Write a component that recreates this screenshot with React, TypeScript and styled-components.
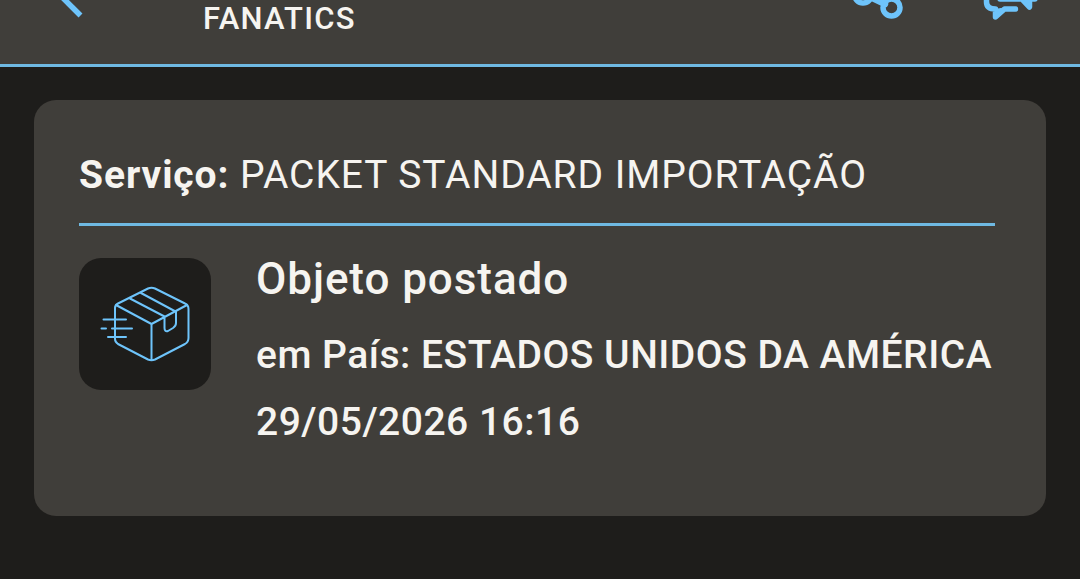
import React from "react";
import styled, { createGlobalStyle } from "styled-components";

const Global = createGlobalStyle`
  html, body { margin: 0; background: #1e1d1b; overflow: hidden; }
  * { box-sizing: border-box; }
`;
const Screen = styled.div`
  height: 579px;
  overflow: hidden;
  background: #1e1d1b;
  color: #f6f4f0;
  font-family: Roboto, "Liberation Sans", sans-serif;
  white-space: nowrap;
`;
const Header = styled.header`
  display: flex;
  height: 67px;
  background: #403e3a;
  border-bottom: 3px solid #6fb9e2;
`;
const BackSlot = styled.div`
  width: 203px;
`;
const HeaderTitle = styled.div`
  flex: 1;
  font-size: 31px;
  font-weight: 500;
  line-height: 38px;
  letter-spacing: 1.3px;
`;
const Actions = styled.div`
  width: 240px;
`;
const Icon = styled.svg`
  display: block;
  fill: none;
  stroke: #6ec4fb;
`;
const Card = styled.main`
  width: 1012px;
  height: 416px;
  margin: 33px 0 0 34px;
  padding: 50px 51px 0 45px;
  border-radius: 22px;
  background: #403e3a;
`;
const Service = styled.div`
  height: 76px;
  border-bottom: 3px solid #6fb9e2;
  font-size: 39px;
  font-weight: 400;
  line-height: 50px;
  letter-spacing: 0.92px;
`;
const Label = styled.b`
  font-weight: 700;
`;
const Event = styled.div`
  display: flex;
  gap: 45px;
  margin-top: 32px;
`;
const Tile = styled.div`
  flex: none;
  width: 132px;
  height: 132px;
  border-radius: 22px;
  background: #1e1d1b;
`;
const Details = styled.div`
  font-weight: 500;
`;
const EventTitle = styled.div`
  font-size: 44px;
  line-height: 42px;
  letter-spacing: 0.93px;
`;
const Line = styled.div<{ $gap: number }>`
  margin-top: ${(p) => p.$gap}px;
  font-size: 39px;
  line-height: 42px;
  letter-spacing: 0.5px;
`;

export default function App() {
  return (
    <Screen>
      <Global />
      <Header>
        <BackSlot>
          <Icon width="203" height="60" strokeWidth="5.5">
            <path d="M55 -10L80.5 15.5" />
          </Icon>
        </BackSlot>
        <HeaderTitle>FANATICS</HeaderTitle>
        <Actions>
          <Icon width="240" height="60" viewBox="840 0 240 60" strokeWidth="5.5" strokeLinecap="round" strokeLinejoin="round">
            <circle cx="863" cy="-5.500" r="8.5" />
            <circle cx="891.500" cy="7.500" r="8.500" />
            <path d="M868 -4L885 4" strokeWidth="6.500" />
            <path d="M986.500 -4V2Q986.500 9 995.500 9V17L1004.500 9H1015.500" />
            <path d="M1000 -1H1022L1029.500 7V-1H1035" />
            <path d="M995.500 10L1001 9L996 16ZM1024 -1H1030V5Z" fill="#6ec4fb" strokeWidth="2" />
          </Icon>
        </Actions>
      </Header>
      <Card>
        <Service><Label>Serviço:</Label> PACKET STANDARD IMPORTAÇÃO</Service>
        <Event>
          <Tile>
            <Icon width="132" height="132" viewBox="79 258 132 132" strokeWidth="2" strokeLinecap="round" strokeLinejoin="round">
              <path d="M115 308Q115 305 118 303.500L148 288.500Q151.500 287 155 288.500L185 303.500Q188.500 305 188.500 309V338Q188.500 342 185 344L155 359.500Q151.500 361 148 359.500L118 344Q115 342 115 339Z" />
              <path d="M116 305L151.500 324L187 305M151.500 324V360M141 293L175.500 311.500M130 298.500L164.500 316.500M164.500 317V328Q164.500 332 168 331L173 328Q176 326 176 323V312" />
              <path d="M103.500 319.500H126M101.500 328.500H106M112 328.500H132M108 337H126" />
            </Icon>
          </Tile>
          <Details>
            <EventTitle>Objeto postado</EventTitle>
            <Line $gap={34}>em País: ESTADOS UNIDOS DA AMÉRICA</Line>
            <Line $gap={25}>29/05/2026 16:16</Line>
          </Details>
        </Event>
      </Card>
    </Screen>
  );
}
